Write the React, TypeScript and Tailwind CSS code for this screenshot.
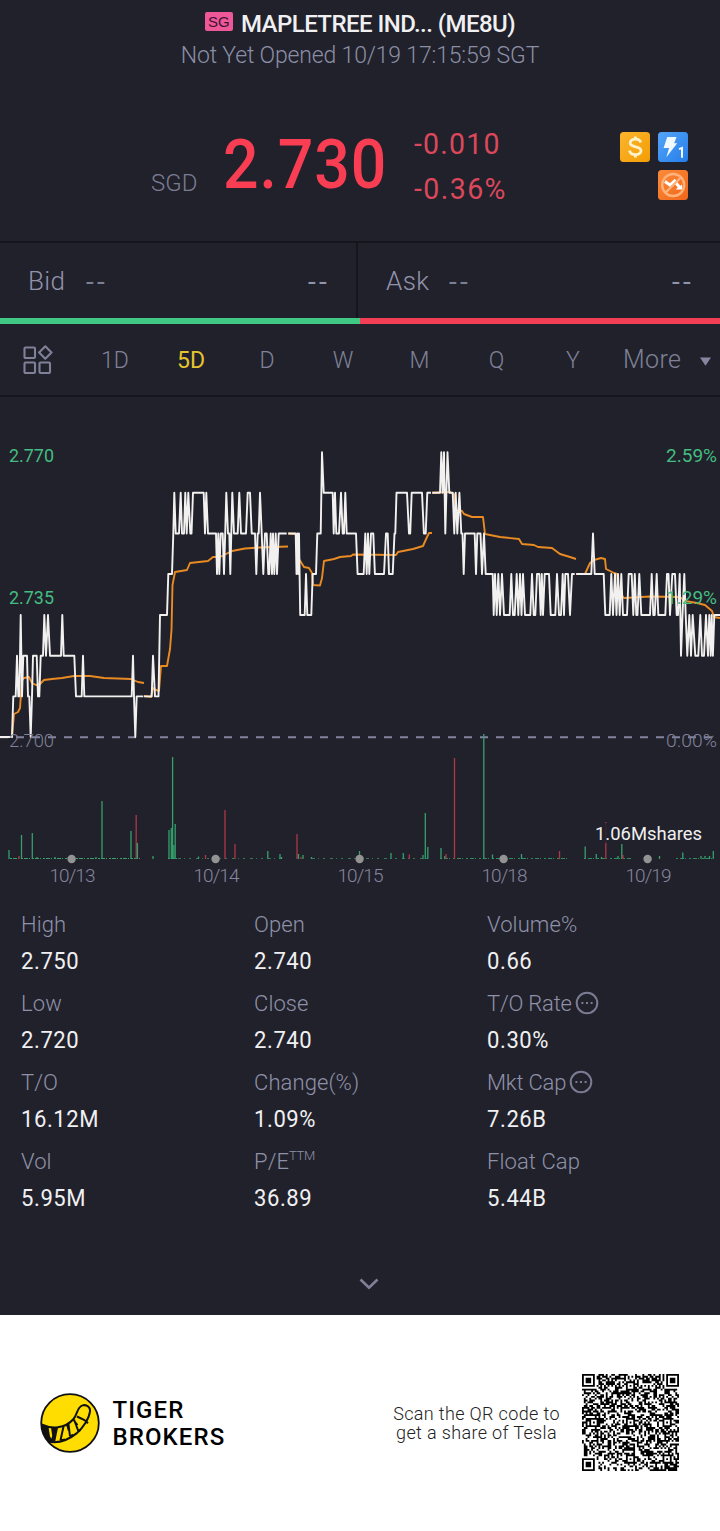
import React from "react";

// price levels run from 2.70 (0) to 2.77 (7)
const levelY = [737, 696.4, 655.7, 615, 574, 533.5, 492.7, 452.3];

const sessions = [
  "0,0 12,0 13.3,1 15.7,1 17,2 18.3,1 19.3,1 20.7,3 22,1 23.3,2 27,2 28,1 29.3,1 30.7,0 32,1 33,2 36.7,2 38,1 39.3,1 40.7,2 43,2 44.3,3 46,2 48,3 50,2 61,2 62.3,3 63.7,2 74.3,2 76,1 81.7,1 83,2 84.3,1 131.7,1 133,2 134,1 135.3,0 136.7,1 143.3,1",
  "144,1 151.7,1 153,2 155,1 158.5,1 160,3 167,3 168.3,4 172,4 173.3,5 174.3,6 175.7,5 179,5 180.7,6 182,5 184,5 185.3,6 186.7,5 188.3,6 190.3,5 191.5,5 193,6 203.7,6 205,5 206.3,6 208,5 216,5 217,4 218.3,5 219.3,4 220.7,5 222.7,5 224,4 225.2,5 226.3,6 228,5 229.3,5 230.3,4 231.3,5 232.3,6 234,5 237.7,5 239.3,6 241,5 246,5 247.7,6 250,6 251.7,5 255,5 256.3,4 257.7,5 258.7,5 260,6 261.7,5 263.3,4 265,5 266.7,5 268.3,4 269.3,4 270.7,5 272,4 273,5 274.3,4 275.7,5 277,4 278.7,5 286.7,5",
  "288.3,5 295.7,5 296.5,4 297.5,5 298.3,4 299,5 300.2,3 304.7,3 306,4 307.3,3 311.3,3 312.7,4 316,4 317.3,5 320.7,5 322,7 323.7,6 332.7,6 333.7,5 335,6 336.3,5 339,5 341,6 342.7,5 344,5 345.3,6 346.7,5 356,5 357.6,4 363.7,4 365.3,5 366.7,4 368,5 369.3,4 371,5 373.3,5 374.9,4 384,4 386,5 387.7,5 389,4 392.7,4 394.5,5 395.3,5 396.5,6 407,6 409,5 410.2,5 411.7,6 422,6 423.9,5 425.7,5 427.3,6 431,6",
  "432.3,6 440,6 441.3,7 442.6,6 444,7 445.3,5 447.5,7 449.3,6 452.7,6 454.3,5 455.7,6 457.3,5 459.4,6 461.3,5 462.5,5 463.7,4 465,5 474.7,5 476,4 477.3,5 480.5,5 482,4 484,5 485.7,4 492.7,4 493.7,3 495,4 496.7,3 498.3,4 500,3 502,4 504,3 509.7,3 511.3,4 513,3 514.7,3 516.7,4 518.3,3 520,4 521.5,3 523,4 525,3 530.3,3 532,4 533.7,3 535.3,3 537,4 539.3,4 540.7,3 541.8,4 543,3 544.7,4 549,4 550.7,3 555.3,3 557,4 559,3 561,3 562.7,4 564,3 565.3,4 568,4 570,3 572,4 574.7,4",
  "576.3,4 591.3,4 593,5 594.7,4 603.7,4 605.3,3 609.7,3 611.3,4 613,3 615,4 616.5,3 618,4 619.7,3 621.3,4 623,3 627,3 628.7,4 631.7,4 633.3,3 634.8,4 636.3,3 637.5,3 639.3,4 641.3,3 650,3 651.7,4 653.3,3 654.7,3 656.7,4 658.3,3 665.3,3 667,4 668.5,4 670,3 672.3,4 675,4 676.7,3 678,3 679.7,4 681,2 682.5,3 684.3,4 685.7,3 687.3,2 689.3,3 691,2 692.7,3 695.3,2 698.3,2 700.3,3 702,2 704,2 706,3 708,2 709.3,3 710.7,2 711.7,3 712.9,2 714.3,3 720,3",
];

const averages = [
  "0,737 12,737 14,714 18,712 20,708 22,680 24,678 29,677 32,683 36,685 40,684 44,680 52,679 62,678 74,676 90,676 104,678 131,679 138,682 144,683",
  "144,696 151,697 153,688 156,690 159,691 161,666 167,666 170,649 171.5,630 172.5,585 175,572 187,570 190,563 208,561 213,557 220,557 232,551 245,548.5 260,547.5 288,546.5",
  "288,533.5 296,534 299,559 304,567 309,568 312,573 313,585 320,585.5 322,578 324,561 334,559 340,557 351,556 353,554.5 396,555 398,552 413,549 423,546 427,537 429,533 432,533",
  "432,492.7 450,492 454,494 456,510 462,511 464,514 472,517 483,517 485,534 500,537 519,539 522,544 534,545 538,547 552,548 560,554 570,557 576,559",
  "576,574 585,574 590,563 594,560 601,558 605,559 606,569 614,573 617,574 619,592 624,598 650,596.5 680,597 685,601 697,603 705,605 712,611 714,617 720,618",
];

// x, height, up / down
const volumes: [number, number, string][] = [
  [9, 9, "u"], [19, 3, "d"], [21.5, 24, "u"], [32.3, 26, "u"], [37, 2, "u"], [55, 2, "u"], [96, 2, "u"], [102, 58, "u"],
  [131, 28, "u"], [136.2, 44, "d"], [137.4, 16, "u"], [153, 3, "u"], [169, 29, "u"], [171.3, 31, "u"], [172.6, 102, "u"],
  [173.9, 14, "u"], [175.2, 35, "u"], [198.5, 2.5, "u"], [205.5, 4, "d"], [225, 49, "d"], [235, 15, "d"], [267.8, 8, "u"],
  [280, 5, "u"], [281.5, 2, "u"], [297, 25, "d"], [298.5, 5, "u"], [301, 2, "d"], [303, 4, "u"], [311.5, 2, "u"],
  [359.5, 8, "u"], [391, 6, "u"], [403.3, 6, "u"], [409.3, 4.5, "d"], [423, 4, "u"], [425.3, 46, "u"], [427.8, 12, "u"],
  [441, 11, "u"], [444.8, 3, "u"], [446, 5, "d"], [454.5, 101, "d"], [483.8, 125, "u"], [492.5, 4.5, "u"], [521.5, 5, "u"],
  [559.5, 8, "d"], [585.2, 12.5, "u"], [596.3, 5, "u"], [601.5, 2, "u"], [605.8, 37, "d"], [618, 3, "u"], [621.8, 15, "u"],
  [623, 4, "d"], [659.5, 3, "u"], [682.8, 6.5, "u"], [701, 3, "u"], [705, 3, "u"], [709.5, 3, "u"], [713.3, 8, "u"],
];

const dates = ["10/13", "10/14", "10/15", "10/18", "10/19"];

const axisLabels = [
  { x: 9, y: 462, width: 45, text: "2.770" },
  { x: 9, y: 604, width: 45, text: "2.735" },
  { x: 9, y: 747, width: 45, text: "2.700", base: true },
  { x: 666, y: 462, width: 51, text: "2.59%" },
  { x: 666, y: 604, width: 51, text: "1.29%" },
  { x: 666, y: 747, width: 51, text: "0.00%", base: true },
];

const stats = [
  { label: "High", value: "2.750" },
  { label: "Open", value: "2.740" },
  { label: "Volume%", value: "0.66" },
  { label: "Low", value: "2.720" },
  { label: "Close", value: "2.740" },
  { label: "T/O Rate", value: "0.30%", info: true },
  { label: "T/O", value: "16.12M" },
  { label: "Change(%)", value: "1.09%" },
  { label: "Mkt Cap", value: "7.26B", info: true },
  { label: "Vol", value: "5.95M" },
  { label: "P/E", value: "36.89", sup: "TTM" },
  { label: "Float Cap", value: "5.44B" },
];

const pricePoints = (session: string) =>
  session
    .split(" ")
    .map((p) => {
      const [x, level] = p.split(",");
      return `${x},${levelY[Number(level)]}`;
    })
    .join(" ");

const QR_SIZE = 53;

// dark modules of the code, with finder, timing and alignment patterns
const qrPath = () => {
  let seed = 20211019;
  let d = "";
  const ring = (x: number, y: number, cx: number, cy: number) =>
    Math.max(Math.abs(x - cx), Math.abs(y - cy));
  const finders = [[3, 3], [QR_SIZE - 4, 3], [3, QR_SIZE - 4]];
  const marks = [[26, 6], [6, 26], [26, 26], [46, 26], [26, 46], [46, 46]];
  for (let y = 0; y < QR_SIZE; y++) {
    for (let x = 0; x < QR_SIZE; x++) {
      seed = (seed * 1103515245 + 12345) % 2147483648;
      let dark = (seed >> 16) % 100 < 53;
      if (x === 6 || y === 6) dark = (x + y) % 2 === 0;
      for (const [cx, cy] of marks) {
        const r = ring(x, y, cx, cy);
        if (r <= 2) dark = r !== 1;
      }
      for (const [cx, cy] of finders) {
        const r = ring(x, y, cx, cy);
        if (r <= 4) dark = r !== 2 && r !== 4;
      }
      if (dark) d += `M${x} ${y}h1v1h-1z`;
    }
  }
  return d;
};

const Header = () => {
  return (
    <header className="h-[241px]">
      <div className="flex h-[38px] items-end justify-center">
        <span className="mr-2 mb-[7px] flex h-[19px] w-7 items-center justify-center rounded-xs bg-[#ee5798] pt-px font-['Liberation_Sans'] text-[15px] text-[#3f1430]">
          SG
        </span>
        <h1 className="text-2xl leading-[28px] font-medium tracking-[-0.55px] text-[#f0f0f2]">
          MAPLETREE IND... (ME8U)
        </h1>
      </div>
      <p className="pt-px text-center text-[23px] leading-[33px] font-light tracking-[-0.17px] text-[#8b8fa6]">
        Not Yet Opened 10/19 17:15:59 SGT
      </p>
      <div className="flex h-[140px] pt-[50px] pl-[151px]">
        <span className="w-[71px] pt-[44px] text-2xl leading-[34px] font-light text-[#7a7c92]">SGD</span>
        <span className="w-[192px] origin-left translate-x-px scale-x-[0.92] text-[68px] leading-[86px] font-medium tracking-[1px] text-[#f93e53]">2.730</span>
        <div className="w-[206px] origin-left scale-x-95 text-[30px] leading-[45px] tracking-[1.3px] text-[#dc485b]">
          <div className="-mt-px">-0.010</div>
          <div className="tracking-[1.5px]">-0.36%</div>
        </div>
        <div className="grid h-[68px] grid-cols-[30px_30px] gap-2 pt-[10px]">
          <DollarBadge />
          <FlashBadge />
          <span />
          <NoShortBadge />
        </div>
      </div>
    </header>
  );
};

const DollarBadge = () => (
  <svg className="size-[30px]" viewBox="0 0 30 30" fill="none">
    <defs>
      <linearGradient id="gold" x1="0" y1="0" x2="1" y2="1">
        <stop stopColor="#fcb52d" />
        <stop offset="1" stopColor="#f39d04" />
      </linearGradient>
    </defs>
    <rect width="30" height="30" rx="3.5" fill="url(#gold)" />
    <path d="M20.7 10.5C20 8 17.8 7.2 15.4 7.2c-3 0-5.2 1.5-5.2 3.9 0 5.2 10.8 2.2 10.8 7.5 0 2.6-2.5 4.1-5.5 4.1-3.2 0-5.5-1.5-6-4.1M15.4 4.5v3M15.4 22.5v3" stroke="#fff1c8" strokeWidth="2.8" />
  </svg>
);

const FlashBadge = () => (
  <svg className="size-[30px]" viewBox="0 0 30 30" fill="none">
    <defs>
      <linearGradient id="sky" x1="0" y1="0" x2="1" y2="1">
        <stop stopColor="#55a5f8" />
        <stop offset="1" stopColor="#247de9" />
      </linearGradient>
    </defs>
    <rect width="30" height="30" rx="3.5" fill="url(#sky)" />
    <path d="M9.2 5h9.3l-2.3 6.3h3L8.3 25.2l2.8-9.1H5.6z" fill="#f0f9ff" />
    <path d="M21 17.2l3-1.3v9.8" stroke="#f0f9ff" strokeWidth="2" />
  </svg>
);

const NoShortBadge = () => (
  <svg className="size-[30px]" viewBox="0 0 30 30" fill="none">
    <defs>
      <linearGradient id="ember" x1="0" y1="0" x2="1" y2="1">
        <stop stopColor="#fb8b39" />
        <stop offset="1" stopColor="#f2661b" />
      </linearGradient>
    </defs>
    <rect width="30" height="30" rx="3.5" fill="url(#ember)" />
    <path d="M7 11.5l5 3.5 4.500-4 5.500 7" stroke="#fff" strokeWidth="3" />
    <path d="M17.500 19.500l6.500-5 .5 5z" fill="#fff" />
    <circle cx="15.2" cy="15" r="11" stroke="#ffb27c" strokeWidth="2.4" />
    <path d="M22.8 7.5L7.6 22.5" stroke="#ffb27c" strokeWidth="2.4" />
  </svg>
);

const BidAsk = () => {
  return (
    <section>
      <div className="flex h-[77px] border-t-2 border-[#15151d] text-[26px] font-light tracking-[0.4px] text-[#9193ab]">
        <div className="flex w-[358px] items-center border-r-2 border-[#15151d] pt-[2px] pr-[26px] pl-7">
          <span className="w-[58px]">Bid</span>
          <span className="grow text-[#7c7e94]"><Dashes /></span>
          <Dashes />
        </div>
        <div className="flex grow items-center pt-[2px] pr-[26px] pl-7">
          <span className="w-[63px]">Ask</span>
          <span className="grow text-[#7c7e94]"><Dashes /></span>
          <Dashes />
        </div>
      </div>
      <div className="flex h-[6px]">
        <div className="w-1/2 bg-[#3fc985]" />
        <div className="w-1/2 bg-[#f43e55]" />
      </div>
    </section>
  );
};

const Dashes = () => <span className="text-[28px] font-normal tracking-[3.2px]">--</span>;

const Tabs = () => {
  return (
    <nav className="flex h-[73px] items-center border-b-2 border-[#15151d] pt-[3px] text-[23px] font-light text-[#7f8198]">
      <svg className="-mt-[3px] ml-[23px] h-[30px] w-[30px]" viewBox="0 0 30 30" fill="none" stroke="currentColor" strokeWidth="2.1">
        <rect x="1.5" y="2.5" width="10.5" height="10.5" rx="1" />
        <rect x="1.5" y="17.5" width="10.5" height="10.5" rx="1" />
        <rect x="16.5" y="17.5" width="10.5" height="10.5" rx="1" />
        <path d="M22.3 1.3l6.2 6.2-6.2 6.2-6.2-6.2z" strokeLinejoin="round" />
      </svg>
      <span className="ml-6 w-[76px] text-center">1D</span>
      <span className="w-[76px] text-center font-normal text-[#e5c52f]">5D</span>
      <span className="w-[76px] text-center">D</span>
      <span className="w-[76px] text-center">W</span>
      <span className="w-[77px] text-center">M</span>
      <span className="w-[77px] text-center">Q</span>
      <span className="w-[76px] text-center">Y</span>
      <span className="-mt-[2px] ml-[12px] w-[77px] text-[25px] tracking-[0.4px]">More</span>
      <svg className="h-[9px] w-[11px]" viewBox="0 0 12 9">
        <path d="M0 0h12L6 9z" fill="#8587a0" />
      </svg>
    </nav>
  );
};

const Chart = () => {
  return (
    <svg className="block h-[498px] w-[720px] font-['Roboto']" viewBox="0 397 720 498" fill="none">
      <path d="M0 737.2H720" stroke="#8283a0" strokeWidth="1.9" strokeDasharray="8 8" />
      {averages.map((line) => (
        <polyline key={line} points={line} stroke="#e98b22" strokeWidth="1.9" strokeLinejoin="round" />
      ))}
      {sessions.map((session) => (
        <polyline key={session} points={pricePoints(session)} stroke="#f2f1f0" strokeWidth="1.9" strokeLinejoin="round" />
      ))}

      {/* Volume */}
      <path d="M10 858.5H140M168 858.5H177" stroke="#37a06d" strokeDasharray="2 1 4 1 1 2" />
      <path d="M178 858.5H286M312 858.5H430" stroke="#2f7955" strokeDasharray="3 3 1 4 2 5" />
      <path d="M440 858.5H570M584 858.5H631M676 858.5H715" stroke="#2f8a5d" strokeDasharray="2 2 4 1 1 3" />
      {volumes.map(([x, h, side]) => (
        <path key={x} d={`M${x} 859v${-h}`} stroke={side === "u" ? "#35a06d" : "#ad3848"} strokeWidth="1.3" />
      ))}
      {dates.map((date, i) => (
        <g key={date}>
          <circle cx={71.6 + i * 144} cy="859" r="4.2" fill="#939393" />
          <text x={72.5 + i * 144} y="882" textAnchor="middle" textLength="46" fill="#8587a0" className="text-[19px] font-light">{date}</text>
        </g>
      ))}
      <rect x="594" y="823" width="110" height="20" fill="#20212a" fillOpacity="0.85" />
      <text x="595" y="840" textLength="107" lengthAdjust="spacingAndGlyphs" fill="#f0f0f2" className="text-[19px]">1.06Mshares</text>

      {/* Axis labels */}
      {axisLabels.map((l) => (
        <text
          key={l.text}
          x={l.x}
          y={l.y}
          textLength={l.width}
          lengthAdjust="spacingAndGlyphs"
          fill={l.base ? "#8082990" : "#43bd81"}
          className={l.base ? "fill-[#808299] text-[19px] font-light" : "text-[19px]"}
        >
          {l.text}
        </text>
      ))}
    </svg>
  );
};

const InfoIcon = () => (
  <svg className="ml-[3px] size-6" viewBox="0 0 24 24" fill="none" stroke="#7a7c93" strokeWidth="2">
    <circle cx="12" cy="12" r="10.3" />
    <path d="M6.4 12h2M11 12h2M15.600 12h2" />
  </svg>
);

const Stats = () => {
  return (
    <section className="grid h-[420px] grid-cols-[233px_233px_1fr] content-start gap-y-[9px] pt-[13px] pl-[21px]">
      {stats.map((s) => (
        <div key={s.label} className="h-[70px]">
          <div className="flex h-8 items-center text-[22px] font-light text-[#8f91a9]">
            <span className={s.info ? "tracking-[-0.2px]" : "tracking-[0.1px]"}>{s.label}</span>
            {s.sup && <sup className="top-0 -mt-[10px] text-[13px] tracking-[-0.4px]">{s.sup}</sup>}
            {s.info && <InfoIcon />}
          </div>
          <div className="origin-left scale-x-[0.9] pt-px text-[24.5px] leading-[40px] tracking-[0.65px] text-[#f0f0f2]">{s.value}</div>
        </div>
      ))}
      <svg className="col-span-3 mt-[54px] ml-[338px] h-3 w-5" viewBox="0 0 20 12" fill="none" stroke="#7f8198" strokeWidth="2.6">
        <path d="M1.500 1.500l8.500 8.300 8.500-8.300" />
      </svg>
    </section>
  );
};

const Logo = () => (
  <svg className="size-[60px]" viewBox="0 0 60 60" fill="none">
    <circle cx="30" cy="30" r="28.8" fill="#ffdd00" stroke="#111" strokeWidth="1.8" />
    <path d="M1.500 31.500C11 36 25 36 33.500 26c4-4.500 3.500-12 9-13.600 4.500-1.200 8 2 7.500 6-.8 7-6.500 16-13.500 22C29 46.500 20 51 8 48.500" stroke="#111" strokeWidth="2" />
    <path d="M1.500 31.500l7 2.400 1.500 9.500 3.800 5.500-6.300-.6C3.500 44 1.500 38 1.500 31.500zM11 34.500l7 .3-2.800 14-4.400-.2 1.400-6z" fill="#111" />
    <path d="M23.500 33.500l-3 13.800M20.500 47.500l4.500-1M28.500 31l1.500 12.500M30 43.500l3-1.800M27 31.500l1.800 6M34 26.500l4.500 12M38.500 38.500l2-1.800M33.500 27l4 5M37 23.500l7.500 3.500 3.500 3.300" stroke="#111" strokeWidth="2" />
  </svg>
);

const Footer = () => {
  return (
    <footer className="flex h-[216px] items-center bg-white pl-[39.500px] text-black">
      <Logo />
      <div className="mt-[2px] ml-[13px] w-[273px] text-2xl leading-[27px] font-medium tracking-[1.1px]">
        TIGER
        <br />
        BROKERS
      </div>
      <p className="w-[182px] text-center text-[18px] leading-[19px] font-light tracking-[0.35px] text-[#222]">
        Scan the QR code to get a share of Tesla
      </p>
      <svg className="-mt-[2px] ml-[14px] size-[97px]" viewBox="0 0 53 53">
        <path d={qrPath()} fill="#000" />
      </svg>
    </footer>
  );
};

const App = () => {
  return (
    <div className="h-[1531px] w-[720px] overflow-hidden bg-[#21212b] font-['Roboto',sans-serif]">
      <Header />
      <BidAsk />
      <Tabs />
      <Chart />
      <Stats />
      <Footer />
    </div>
  );
};

export default App;
